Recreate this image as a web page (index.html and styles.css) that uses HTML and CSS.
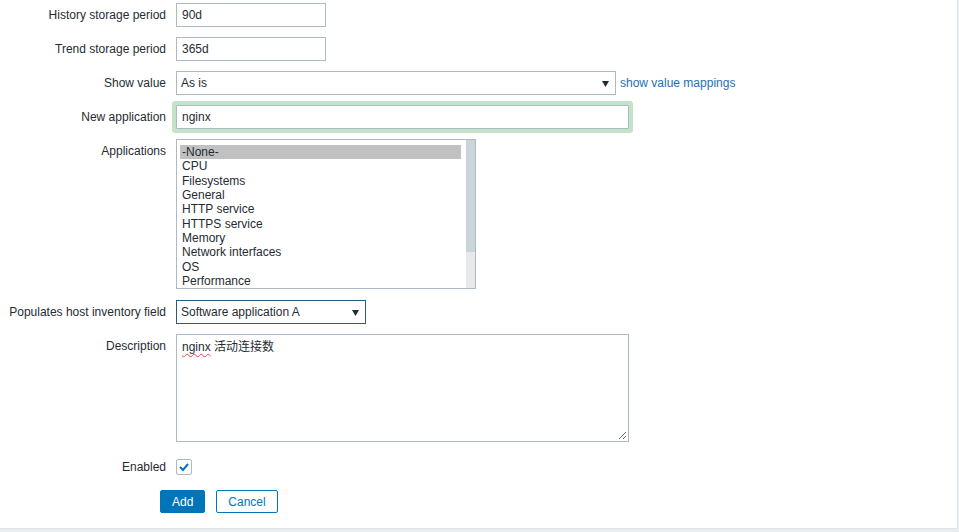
FILE: index.html
```html
<!DOCTYPE html>
<html lang="en">
<head>
    <meta charset="UTF-8">
    <meta name="viewport" content="width=device-width, initial-scale=1.0">
    <title>Item</title>
    <link rel="stylesheet" href="styles.css">
</head>
<body>
    <div class="wrapper">
        <ul class="table-forms">
            <li>
                <div class="td-left"><label>History storage period</label></div>
                <div class="td-right"><input class="input w-150" type="text" value="90d"></div>
            </li>
            <li>
                <div class="td-left"><label>Trend storage period</label></div>
                <div class="td-right"><input class="input w-150" type="text" value="365d"></div>
            </li>
            <li>
                <div class="td-left"><label>Show value</label></div>
                <div class="td-right">
                    <span class="select w-440">
                        <span class="select-text">As is</span>
                        <svg class="select-arrow" width="7" height="6" viewBox="0 0 7 6"><path d="M0 0 H7 L3.5 6 Z" fill="#1f2c33"/></svg>
                    </span>
                    <a href="#" class="link">show value mappings</a>
                </div>
            </li>
            <li>
                <div class="td-left"><label>New application</label></div>
                <div class="td-right"><input class="input w-453 is-highlighted" type="text" value="nginx"></div>
            </li>
            <li>
                <div class="td-left"><label>Applications</label></div>
                <div class="td-right">
                    <div class="listbox">
                        <ul class="listbox-items">
                            <li class="is-selected">-None-</li>
                            <li>CPU</li>
                            <li>Filesystems</li>
                            <li>General</li>
                            <li>HTTP service</li>
                            <li>HTTPS service</li>
                            <li>Memory</li>
                            <li>Network interfaces</li>
                            <li>OS</li>
                            <li>Performance</li>
                        </ul>
                        <div class="scrollbar"><div class="scrollbar-thumb"></div></div>
                    </div>
                </div>
            </li>
            <li class="row-after-list">
                <div class="td-left"><label>Populates host inventory field</label></div>
                <div class="td-right">
                    <span class="select w-190 is-focused">
                        <span class="select-text">Software application A</span>
                        <svg class="select-arrow" width="7" height="6" viewBox="0 0 7 6"><path d="M0 0 H7 L3.5 6 Z" fill="#1f2c33"/></svg>
                    </span>
                </div>
            </li>
            <li>
                <div class="td-left"><label>Description</label></div>
                <div class="td-right">
                    <div class="textarea w-453"><span class="misspelled">nginx</span> 活动连接数
                        <svg class="resize-grip" width="8" height="8" viewBox="0 0 8 8"><path d="M1 8 L8 1 M5 8 L8 5" stroke="#6b6b6b" stroke-width="1"/></svg>
                    </div>
                </div>
            </li>
            <li class="row-checkbox">
                <div class="td-left"><label>Enabled</label></div>
                <div class="td-right">
                    <span class="checkbox">
                        <svg width="12" height="10" viewBox="0 0 12 10"><path d="M2 5 L5 8 L10 2" fill="none" stroke="#0275b8" stroke-width="2"/></svg>
                    </span>
                </div>
            </li>
            <li class="row-buttons">
                <button class="button" type="submit">Add</button>
                <button class="button button-alt" type="button">Cancel</button>
            </li>
        </ul>
    </div>
</body>
</html>
```

FILE: styles.css
```css
* {
    margin: 0;
    padding: 0;
    box-sizing: border-box;
}
body {
    font-family: "Liberation Sans", Arial, "Noto Sans CJK SC", sans-serif;
    font-size: 12px;
    color: #1f2c33;
    background-color: #ebeef0;
}

.wrapper {
    width: 958px;
    height: 529px;
    background: #ffffff;
    border-right: 1px solid #dfe4e7;
    border-bottom: 1px solid #dfe4e7;
    padding-top: 3px;
    overflow: hidden;
}

.table-forms {
    list-style: none;
}
.table-forms > li {
    display: flex;
    gap: 10px;
    margin-bottom: 10px;
}
.td-left {
    width: 166px;
    flex-shrink: 0;
    text-align: right;
    line-height: 24px;
}
.td-right {
    display: flex;
    align-items: center;
    align-self: flex-start;
    gap: 4px;
}

.input {
    height: 24px;
    padding: 0 5px;
    border: 1px solid #acbbc2;
    font-family: inherit;
    font-size: 12px;
    color: #1f2c33;
    background: #ffffff;
}
.is-highlighted {
    box-shadow: 0 0 0 4px #c5e3c8;
    border-radius: 1px;
}

.w-150 { width: 150px; }
.w-190 { width: 190px; }
.w-440 { width: 440px; }
.w-453 { width: 453px; }

.select {
    position: relative;
    display: flex;
    align-items: center;
    height: 24px;
    padding: 0 4px;
    border: 1px solid #acbbc2;
    background: #ffffff;
}
.select.is-focused {
    border-color: #2b5b78;
}
.select-arrow {
    position: absolute;
    right: 6px;
    top: 9px;
}

.link {
    color: #1f6fb1;
    text-decoration: none;
}

.listbox {
    position: relative;
    width: 300px;
    height: 150px;
    border: 1px solid #acbbc2;
    overflow: hidden;
}
.listbox-items {
    list-style: none;
    padding: 5px 0 0 3px;
    width: 284px;
}
.listbox-items li {
    line-height: 14.33px;
    padding-left: 2px;
}
.listbox-items .is-selected {
    background: #c1c1c1;
}
.scrollbar {
    position: absolute;
    right: 0;
    top: 0;
    width: 9px;
    height: 100%;
    background: #e9e8ea;
}
.scrollbar-thumb {
    height: 112px;
    background: #c9d4db;
}

.row-after-list {
    padding-top: 1px;
}

.textarea {
    position: relative;
    height: 108px;
    padding: 4px 5px;
    border: 1px solid #acbbc2;
    line-height: 16px;
    background: #ffffff;
}
.misspelled {
    text-decoration: underline wavy #e04848;
    text-decoration-thickness: 1px;
    text-underline-offset: 2px;
}
.resize-grip {
    position: absolute;
    right: 2px;
    bottom: 2px;
}

.row-checkbox {
    padding-top: 3px;
}
.row-checkbox .td-right {
    height: 24px;
}
.checkbox {
    display: flex;
    align-items: center;
    justify-content: center;
    width: 16px;
    height: 16px;
    border: 1px solid #acbbc2;
    border-radius: 2px;
    background: #ffffff;
}

.table-forms > li.row-buttons {
    padding-top: 1px;
    padding-left: 160px;
    gap: 11px;
}
.button {
    height: 23px;
    padding: 0 11px;
    border: 1px solid #0275b8;
    border-radius: 2px;
    background-color: #0275b8;
    color: #ffffff;
    font-family: inherit;
    font-size: 12px;
    cursor: pointer;
}
.button-alt {
    background-color: #ffffff;
    color: #0275b8;
}
```
